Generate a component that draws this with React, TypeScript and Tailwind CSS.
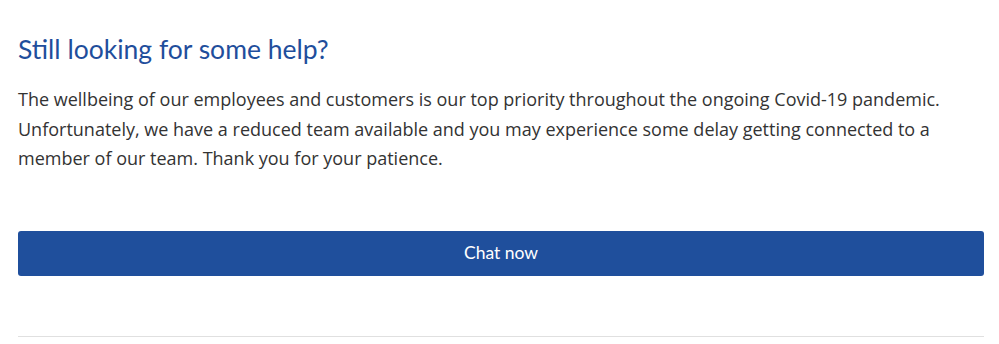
export default function App() {
  return (
    <main className="w-[999px] h-[344px] bg-white overflow-hidden">
      <section className="px-[18px] pt-[33px]">
        <h2 className="text-[26.5px] leading-[32px] text-[#1f4e9c] font-['Lato',sans-serif]">
          Still looking for some help?
        </h2>
        <p className="mt-[20px] text-[18px] leading-[29.5px] text-[#333] font-['Open_Sans',sans-serif] whitespace-nowrap">
          The wellbeing of our employees and customers is our top priority throughout the ongoing Covid-19 pandemic.
          <br />
          Unfortunately, we have a reduced team available and you may experience some delay getting connected to a
          <br />
          member of our team. Thank you for your patience.
        </p>
        <button className="mt-[57px] w-[966px] h-[45px] rounded-[3px] bg-[#1f4f9c] text-white text-[17.5px] font-['Lato',sans-serif] flex items-center justify-center">
          Chat now
        </button>
        <div className="mt-[60px] w-[966px] border-t border-[#e0e0e0]" />
      </section>
    </main>
  );
}
